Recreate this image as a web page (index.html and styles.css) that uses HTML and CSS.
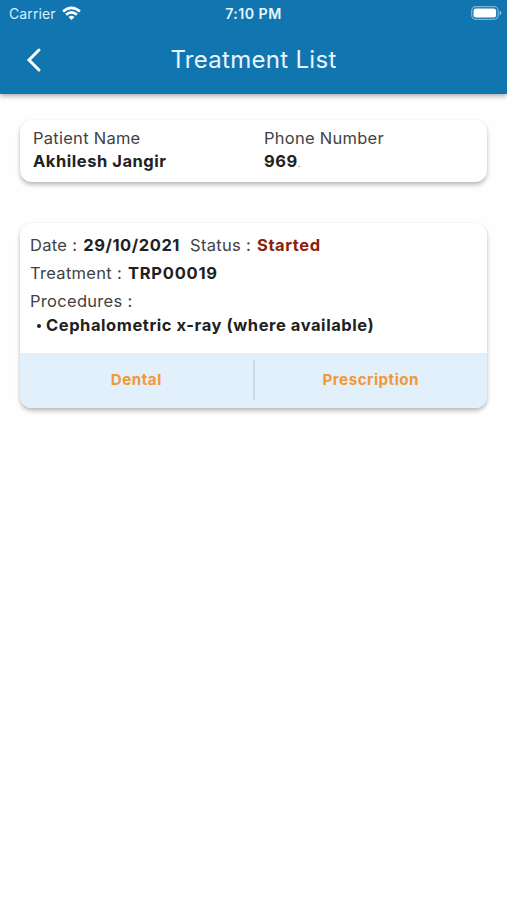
FILE: index.html
```html
<!DOCTYPE html>
<html lang="en">
<head>
<meta charset="utf-8">
<title>Treatment List</title>
<link rel="stylesheet" href="styles.css">
</head>
<body>
<header class="header">
  <div class="status">
    <div class="carrier"><span>Carrier</span>
      <svg width="19" height="14" viewBox="0 0 19 14" fill="none" stroke="#fff" stroke-width="2.7"><path d="M1.1 5.4Q9.5-1.8 17.9 5.4"/><path d="M4.1 8.7Q9.5 4 14.9 8.7"/><path d="M6.5 11.1Q9.5 8.6 12.5 11.1L9.5 13.9Z" fill="#fff" stroke="none"/></svg>
    </div>
    <div class="time">7:10 PM</div>
    <div class="battery">
      <svg width="31" height="14" viewBox="0 0 31 14"><rect x=".7" y=".7" width="26.4" height="12.6" rx="4" fill="none" stroke="#fff" stroke-opacity=".45" stroke-width="1.2"/><rect x="2.5" y="2.4" width="22.6" height="9.2" rx="2.3" fill="#fff"/><path d="M28.5 4.6Q30.5 5.3 30.5 7T28.5 9.4Z" fill="#fff" fill-opacity=".5"/></svg>
    </div>
  </div>
  <nav class="nav">
    <svg class="back" width="18" height="26" viewBox="0 0 18 26" fill="none" stroke="#fff" stroke-width="3" stroke-linecap="round" stroke-linejoin="miter"><path d="M14 3L4 13L14 23"/></svg>
    <h1>Treatment List</h1>
  </nav>
</header>
<main>
  <section class="card patient">
    <div><p class="label name-label">Patient Name</p><p class="value name">Akhilesh Jangir</p></div>
    <div><p class="label phone-label">Phone Number</p><p class="value phone">969<span class="speck">.</span></p></div>
  </section>
  <section class="card treatment">
    <div class="details">
      <p class="row"><span>Date :</span><b class="date">29/10/2021</b><span class="status-label">Status :</span><b class="started">Started</b></p>
      <p class="row"><span>Treatment :</span><b class="code">TRP00019</b></p>
      <p class="row procedures">Procedures :</p>
      <p class="procedure"><span class="bullet"></span><b>Cephalometric x-ray (where available)</b></p>
    </div>
    <div class="actions"><a class="dental">Dental</a><i class="divider"></i><a class="prescription">Prescription</a></div>
  </section>
</main>
</body>
</html>
```
FILE: styles.css
```css
* { box-sizing: border-box; }
body { margin: 0; min-height: 900px; background: #fefefe; color: #424242; font: 16.5px/24px Inter, "Liberation Sans", sans-serif; }
p, h1 { margin: 0; }
b { font-weight: 700; color: #212121; letter-spacing: .56px; }
.header { height: 94px; background: #1175b0; color: #fff; box-shadow: 0 2px 5px rgba(0,0,0,.34); }
.status { display: grid; grid-template-columns: 1fr auto 1fr; height: 28px; align-items: center; padding: 0 7px 0 9px; font-size: 14px; line-height: 28px; }
.carrier { display: flex; align-items: center; gap: 6px; color: #d9effc; letter-spacing: .1px; }
.carrier svg { margin-top: -2px; }
.time { font-weight: 600; font-size: 14.2px; letter-spacing: .45px; color: #e9f6ff; margin-left: -2px; }
.battery { display: flex; justify-content: flex-end; margin: -2px -2px 0 0; }
.nav { display: grid; grid-template-columns: 1fr auto 1fr; height: 64px; align-items: center; }
.back { margin-left: 25px; }
h1 { font-size: 24px; line-height: 32px; font-weight: 400; letter-spacing: .3px; color: #e8f6ff; }
main { padding: 26px 20px 0; }
.card { background: #fff; border-radius: 12px; box-shadow: 0 3px 4px rgba(0,0,0,.25), 0 0 3px rgba(0,0,0,.05); }
.patient { display: grid; grid-template-columns: 231px 1fr; height: 62px; padding: 7px 13px; line-height: 23px; }
.value { font-weight: 700; color: #212121; letter-spacing: .54px; }
.label { letter-spacing: .26px; }
.speck { font-size: 9px; color: #888; font-weight: 400; }
.treatment { margin-top: 41px; overflow: hidden; height: 185px; display: flex; flex-direction: column; }
.details { height: 130px; padding: 8px 10px 0; letter-spacing: .3px; }
.row { display: flex; gap: 6px; height: 28px; line-height: 28px; }
.status-label { margin-left: 4px; }
.started { color: #8b210d; }
.code { letter-spacing: .75px; }
.procedures { height: 26px; }
.procedure { display: flex; align-items: center; gap: 5px; height: 24px; padding-left: 7px; }
.bullet { width: 4px; height: 4px; border-radius: 50%; background: #212121; margin-top: 2px; }
.actions { height: 55px; padding-bottom: 1px; display: grid; grid-template-columns: 1fr 2px 1fr; align-items: center; background: #e2f0fb; color: #f19837; font-size: 15.2px; font-weight: 700; text-align: center; letter-spacing: .5px; }
.divider { height: 40px; background: #cbdbe7; }
```
